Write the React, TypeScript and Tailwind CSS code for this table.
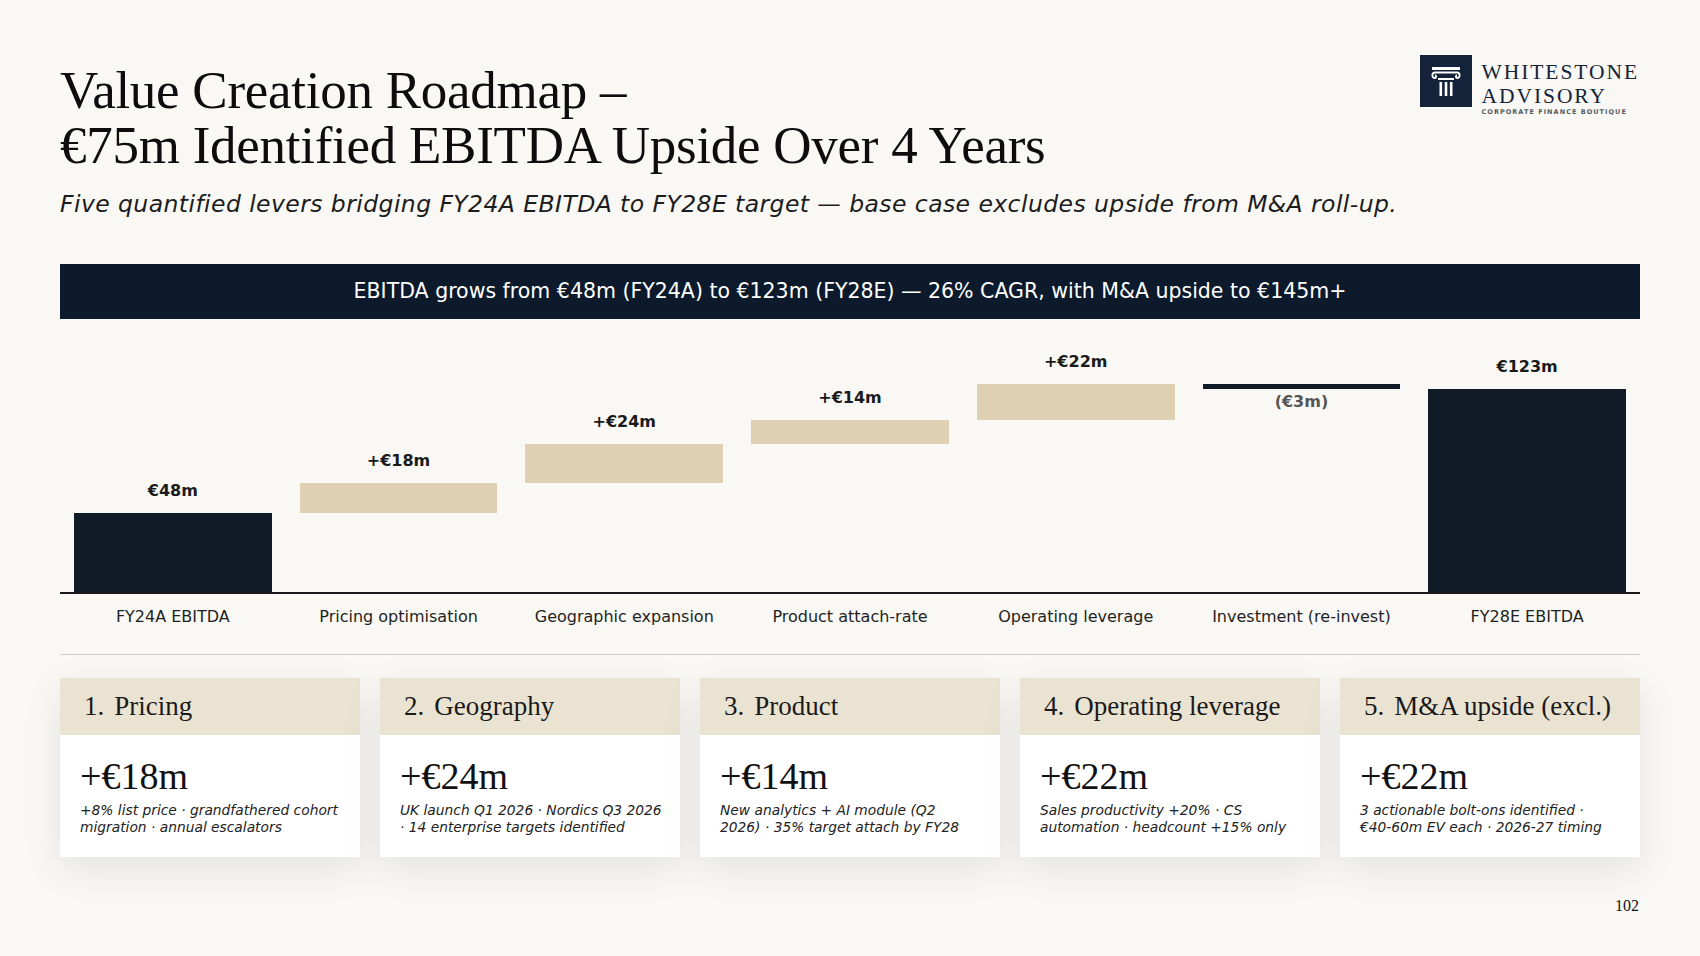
const steps = [
  { label: "FY24A EBITDA", value: "€48m", base: 0, size: 48, kind: "total" },
  { label: "Pricing optimisation", value: "+€18m", base: 48, size: 18, kind: "up" },
  { label: "Geographic expansion", value: "+€24m", base: 66, size: 24, kind: "up" },
  { label: "Product attach-rate", value: "+€14m", base: 90, size: 14, kind: "up" },
  { label: "Operating leverage", value: "+€22m", base: 104, size: 22, kind: "up" },
  { label: "Investment (re-invest)", value: "(€3m)", base: 123, size: 3, kind: "down" },
  { label: "FY28E EBITDA", value: "€123m", base: 0, size: 123, kind: "total" },
];

const levers = [
  { n: "1.", title: "Pricing", value: "+€18m", lines: ["+8% list price · grandfathered cohort", "migration · annual escalators"] },
  { n: "2.", title: "Geography", value: "+€24m", lines: ["UK launch Q1 2026 · Nordics Q3 2026", "· 14 enterprise targets identified"] },
  { n: "3.", title: "Product", value: "+€14m", lines: ["New analytics + AI module (Q2", "2026) · 35% target attach by FY28"] },
  { n: "4.", title: "Operating leverage", value: "+€22m", lines: ["Sales productivity +20% · CS", "automation · headcount +15% only"] },
  { n: "5.", title: "M&A upside (excl.)", value: "+€22m", lines: ["3 actionable bolt-ons identified ·", "€40-60m EV each · 2026-27 timing"] },
];

// pixels per €m in the bridge chart
const PX = 1.65;

function Logo() {
  return (
    <div className="flex items-start gap-[10px] mt-[-8px] mr-[1px]">
      <div className="w-[52px] h-[52px] bg-[#14233a] flex items-center justify-center">
        <svg width="40" height="40" viewBox="0 0 40 40" fill="none">
          <rect x="6" y="6" width="28" height="3" fill="#ffffff" />
          <path d="M9 11.5 H31" stroke="#ffffff" strokeWidth="2" />
          <path d="M9 11.5 C5.5 11.5 5.5 17 9 17 C10.5 17 10.5 14.5 9 14.5" stroke="#ffffff" strokeWidth="1.8" fill="none" />
          <path d="M31 11.5 C34.5 11.5 34.5 17 31 17 C29.5 17 29.5 14.5 31 14.5" stroke="#ffffff" strokeWidth="1.8" fill="none" />
          <rect x="12" y="17" width="16" height="2" fill="#ffffff" />
          <rect x="13.5" y="21" width="2.6" height="14" fill="#ffffff" />
          <rect x="18.7" y="21" width="2.6" height="14" fill="#ffffff" />
          <rect x="23.9" y="21" width="2.6" height="14" fill="#ffffff" />
        </svg>
      </div>
      <div className="flex flex-col">
        <div className="font-['Liberation_Serif',serif] text-[21.5px] leading-[24px] tracking-[0.09em] text-[#14233a] mt-[5px]">
          WHITESTONE
          <br />
          ADVISORY
        </div>
        <div className="font-['DejaVu_Sans',sans-serif] text-[6.5px] leading-[10px] tracking-[0.16em] font-semibold text-[#555b63] mt-[-1px]">CORPORATE FINANCE BOUTIQUE</div>
      </div>
    </div>
  );
}

export default function App() {
  return (
    <div className="w-[1700px] h-[956px] bg-[#f9f8f4] px-[60px] pt-[63px] relative overflow-hidden font-['DejaVu_Sans',sans-serif] text-[#111]">
      <div className="flex justify-between items-start">
        <h1 className="font-['Liberation_Serif',serif] text-[53px] leading-[55px] tracking-[-0.005em] text-[#0d0d0d]">
          Value Creation Roadmap –<br />€75m Identified EBITDA Upside Over 4 Years
        </h1>
        <Logo />
      </div>
      <p className="mt-[16px] italic text-[23.5px] leading-[30px] tracking-[0.018em] text-[#1c1c1c]">
        Five quantified levers bridging FY24A EBITDA to FY28E target — base case excludes upside from M&amp;A roll-up.
      </p>

      <div className="mt-[45px] h-[55px] bg-[#0c1a2c] flex items-center justify-center text-white text-[20.5px]">
        EBITDA grows from €48m (FY24A) to €123m (FY28E) — 26% CAGR, with M&amp;A upside to €145m+
      </div>

      <div className="grid grid-cols-7 h-[275px] border-b-2 border-[#1a1a1a]">
        {steps.map((s) => (
          <div key={s.label} className="flex flex-col justify-end items-stretch px-[14px]">
            {s.kind !== "down" && (
              <div className="text-center font-bold text-[16px] leading-[20px] mb-[12px] text-[#1a1a1a]">{s.value}</div>
            )}
            <div
              className={s.kind === "up" ? "bg-[#dfd0b3]" : "bg-[#111b27]"}
              style={{ height: s.size * PX }}
            />
            <div style={{ height: s.base * PX }}>
              {s.kind === "down" && (
                <div className="text-center font-bold text-[16px] leading-[20px] pt-[3px] text-[#555]">{s.value}</div>
              )}
            </div>
          </div>
        ))}
      </div>

      <div className="grid grid-cols-7 pt-[13px] pb-[27px] border-b border-[#cfcdc8]">
        {steps.map((s) => (
          <div key={s.label} className="text-center text-[16px] leading-[20px] text-[#1f1f1f]">{s.label}</div>
        ))}
      </div>

      <div className="mt-[23px] grid grid-cols-5 gap-[20px]">
        {levers.map((l) => (
          <div key={l.n} className="bg-white shadow-[0_12px_36px_rgba(0,0,0,0.09)]">
            <div className="h-[57px] bg-[#ebe3d2] flex items-center px-[24px] font-['Liberation_Serif',serif] text-[27px] text-[#1a1a1a]">
              <span className="mr-[10px]">{l.n}</span>
              <span>{l.title}</span>
            </div>
            <div className="h-[122px] px-[20px] pt-[21px]">
              <div className="font-['Liberation_Serif',serif] text-[38px] leading-[40px] text-[#111]">{l.value}</div>
              <div className="mt-[6px] italic text-[13.8px] leading-[17px] text-[#222] whitespace-nowrap">
                {l.lines.map((line) => (
                  <div key={line}>{line}</div>
                ))}
              </div>
            </div>
          </div>
        ))}
      </div>

      <div className="absolute right-[61px] bottom-[38px] font-['Liberation_Serif',serif] text-[16px] text-[#111]">102</div>
    </div>
  );
}
